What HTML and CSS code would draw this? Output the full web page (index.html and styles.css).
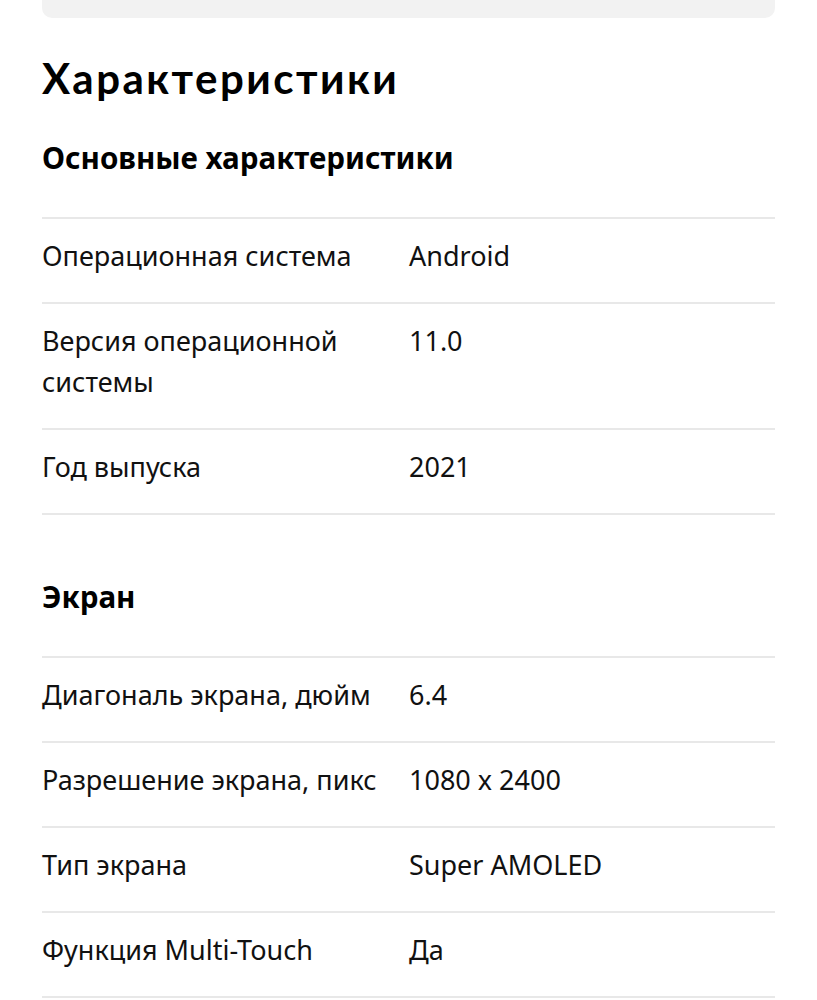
FILE: index.html
```html
<!DOCTYPE html>
<html lang="ru">
<head>
<meta charset="utf-8">
<title>Характеристики</title>
<link rel="stylesheet" href="styles.css">
</head>
<body>
<div class="page">
  <div class="topbox"></div>
  <h1 class="title">Характеристики</h1>

  <section class="group">
    <h2 class="group-title">Основные характеристики</h2>
    <div class="specs">
      <div class="row"><div class="name">Операционная система</div><div class="value">Android</div></div>
      <div class="row"><div class="name">Версия операционной системы</div><div class="value">11.0</div></div>
      <div class="row"><div class="name">Год выпуска</div><div class="value">2021</div></div>
    </div>
  </section>

  <section class="group">
    <h2 class="group-title">Экран</h2>
    <div class="specs">
      <div class="row"><div class="name">Диагональ экрана, дюйм</div><div class="value">6.4</div></div>
      <div class="row"><div class="name">Разрешение экрана, пикс</div><div class="value">1080 x 2400</div></div>
      <div class="row"><div class="name">Тип экрана</div><div class="value">Super AMOLED</div></div>
      <div class="row"><div class="name">Функция Multi-Touch</div><div class="value">Да</div></div>
    </div>
  </section>
</div>
</body>
</html>
```

FILE: styles.css
```css
html, body {
  margin: 0;
  padding: 0;
  background: #fff;
}
body {
  font-family: "Noto Sans", "Open Sans", sans-serif;
  color: #111;
}
.page {
  padding: 0 42px;
}
.topbox {
  height: 18px;
  background: #f2f2f2;
  border-radius: 0 0 10px 10px;
}
.title {
  margin: 0;
  padding-top: 37px;
  font-family: "Lato", "Inter", sans-serif;
  font-weight: 700;
  font-size: 42px;
  line-height: 46px;
  letter-spacing: 2.5px;
  color: #000;
}
.group-title {
  margin: 0;
  font-weight: 700;
  font-size: 29.6px;
  line-height: 40px;
  padding-top: 37px;
  padding-bottom: 39px;
  color: #000;
}
.group + .group .group-title {
  padding-top: 62px;
}
.specs {
  border-top: 2px solid #e8e8e8;
}
.row {
  display: flex;
  border-bottom: 2px solid #e8e8e8;
  padding: 16px 0 26px;
  font-size: 27px;
  line-height: 41px;
}
.name {
  width: 367px;
  flex: none;
  padding-right: 12px;
  box-sizing: border-box;
}
.value {
  flex: 1;
}
```
